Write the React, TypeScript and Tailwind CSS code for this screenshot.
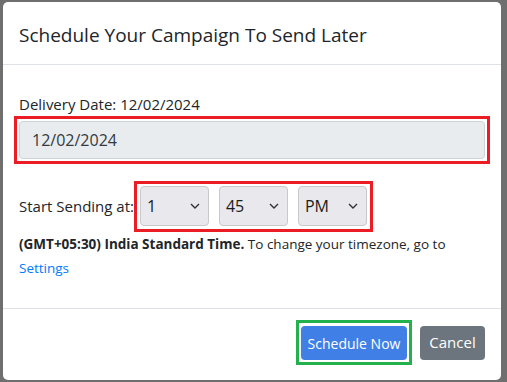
import type { ReactNode } from "react";

const font = { fontFamily: '"Open Sans", "Noto Sans", sans-serif' };

function Chevron() {
  return (
    <svg width="10" height="6" viewBox="0 0 10 6" className="shrink-0">
      <path d="M1 1l4 4 4-4" fill="none" stroke="#333" strokeWidth="1.4" />
    </svg>
  );
}

function TimeSelect({ value }: { value: string }) {
  return (
    <div className="flex h-[40px] w-[69px] items-center justify-between rounded-[4px] border border-[#c9c9cc] bg-[#e9e9ed] pl-[6px] pr-[8px] text-[16px] text-[#1b1b1b]">
      <span>{value}</span>
      <Chevron />
    </div>
  );
}

function Highlight({ children, className }: { children: ReactNode; className: string }) {
  return <div className={`border-[3px] ${className}`}>{children}</div>;
}

export default function App() {
  return (
    <div className="h-[382px] w-[507px] overflow-hidden bg-[#6f6f6f] pl-[3px] pt-[2px]" style={font}>
      <div className="flex h-[378px] w-[498px] flex-col rounded-[5px] bg-white text-[#212529]">
        <header className="h-[63px] border-b border-[#dee2e6] px-4 pt-[18px]">
          <h1 className="text-[19px] leading-[30px] text-[#212529]">Schedule Your Campaign To Send Later</h1>
        </header>

        <section className="flex-1 px-4 pt-[28px]">
          <label className="block text-[15px] leading-[23px]">Delivery Date: 12/02/2024</label>
          <Highlight className="-mx-[5px] border-[#ec1c24] p-[2px]">
            <div className="flex h-[38px] items-center rounded-[4px] border border-[#ced4da] bg-[#e9ecef] px-3 text-[16px] text-[#343a40]">
              12/02/2024
            </div>
          </Highlight>

          <div className="mt-[17px] flex items-center">
            <span className="text-[15px]">Start Sending at:</span>
            <Highlight className="border-[#ec1c24] px-[3px] pb-[3px] pt-[2px]">
              <div className="flex gap-[10px]">
                <TimeSelect value="1" />
                <TimeSelect value="45" />
                <TimeSelect value="PM" />
              </div>
            </Highlight>
          </div>

          <p className="text-[13.5px] leading-[24px]">
            <strong className="font-bold">(GMT+05:30) India Standard Time.</strong> To change your timezone, go to
            <br />
            <a className="text-[#007bff]">Settings</a>
          </p>
        </section>

        <footer className="flex h-[72px] items-center justify-end gap-[8px] border-t border-[#dee2e6] px-4 pb-[4px]">
          <Highlight className="border-[#22b14c] px-[2px] pb-[2px] pt-[3px]">
            <button className="h-[34px] w-[106px] rounded-[4px] bg-[#3f7fe6] text-[14px] text-white">Schedule Now</button>
          </Highlight>
          <button className="h-[34px] w-[65px] rounded-[4px] bg-[#6c757d] text-[15px] text-white">Cancel</button>
        </footer>
      </div>
    </div>
  );
}
